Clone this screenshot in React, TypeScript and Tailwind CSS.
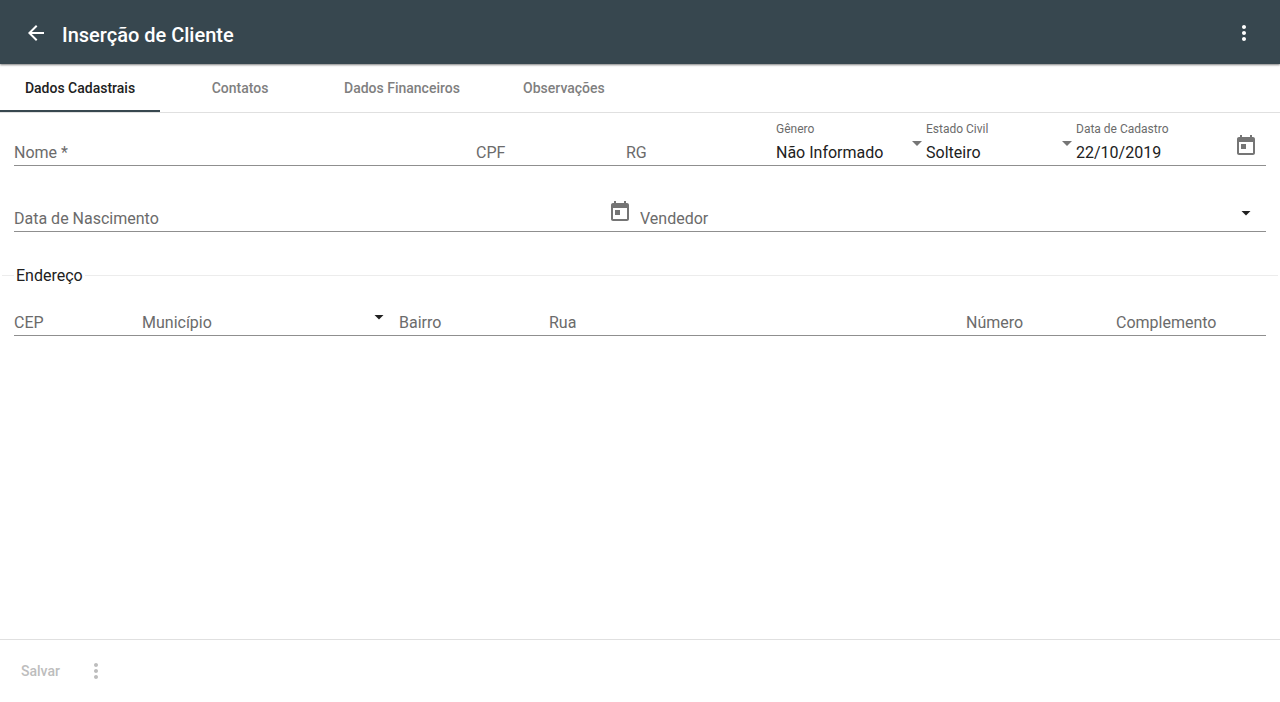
import { useState } from 'react';
import type { ReactNode } from 'react';
import clsx from 'clsx';

const TABS = ['Dados Cadastrais', 'Contatos', 'Dados Financeiros', 'Observações'];

function MoreIcon() {
  return (
    <svg viewBox="0 0 24 24" className="size-6 fill-current" aria-hidden="true">
      <path d="M12 8c1.1 0 2-.9 2-2s-.9-2-2-2-2 .9-2 2 .9 2 2 2zm0 2c-1.1 0-2 .9-2 2s.9 2 2 2 2-.9 2-2-.9-2-2-2zm0 6c-1.1 0-2 .9-2 2s.9 2 2 2 2-.9 2-2-.9-2-2-2z" />
    </svg>
  );
}

function BackIcon() {
  return (
    <svg viewBox="0 0 24 24" className="size-6 fill-current" aria-hidden="true">
      <path d="M20 11H7.83l5.59-5.59L12 4l-8 8 8 8 1.41-1.41L7.83 13H20v-2z" />
    </svg>
  );
}

function TodayIcon() {
  return (
    <svg viewBox="0 0 24 24" className="size-6 fill-[#757575]" aria-hidden="true">
      <path d="M19 3h-1V1h-2v2H8V1H6v2H5c-1.11 0-1.99.9-1.99 2L3 19c0 1.1.89 2 2 2h14c1.1 0 2-.9 2-2V5c0-1.1-.9-2-2-2zm0 16H5V8h14v11zM7 10h5v5H7z" />
    </svg>
  );
}

function DropDownIcon() {
  return (
    <svg viewBox="0 0 24 24" className="size-6 fill-[#212121]" aria-hidden="true">
      <path d="M7.5 11h9L12 15.5z" />
    </svg>
  );
}

type FieldProps = {
  id: string;
  label: string;
  className: string;
  value?: string;
  required?: boolean;
  options?: string[];
  action?: ReactNode;
  actionLabel?: string;
};

function Field({ id, label, className, value = '', required, options, action, actionLabel }: FieldProps) {
  const [current, setCurrent] = useState(value);
  const [focused, setFocused] = useState(false);
  const floating = focused || current !== '';

  return (
    <div className={clsx('grid grid-cols-[1fr_auto] grid-rows-[20px_25px] border-b border-[#8f8f8f]', className)}>
      <label
        htmlFor={id}
        className={clsx(
          'pointer-events-none z-10 col-start-1 truncate text-[#6b6b6b]',
          floating ? 'row-start-1 text-xs leading-[18px]' : 'row-start-2 text-base leading-[25px]',
        )}
      >
        {label}
        {required && ' *'}
      </label>
      {options ? (
        <>
          <select
            id={id}
            value={current}
            onChange={(e) => setCurrent(e.target.value)}
            className="col-span-2 col-start-1 row-start-2 min-w-0 appearance-none bg-transparent pr-5 leading-[25px] outline-none"
          >
            {options.map((option) => (
              <option key={option}>{option}</option>
            ))}
          </select>
          <svg
            viewBox="0 0 10 5"
            className="pointer-events-none col-start-2 row-start-2 mt-px mr-1 h-[5px] w-[10px] fill-[#757575]"
            aria-hidden="true"
          >
            <path d="M0 0h10L5 5z" />
          </svg>
        </>
      ) : (
        <input
          id={id}
          value={current}
          required={required}
          autoComplete="off"
          onChange={(e) => setCurrent(e.target.value)}
          onFocus={() => setFocused(true)}
          onBlur={() => setFocused(false)}
          className="col-start-1 row-start-2 w-full min-w-0 bg-transparent leading-[25px] outline-none"
        />
      )}
      {action && (
        <button
          type="button"
          aria-label={actionLabel}
          className="col-start-2 row-span-2 row-start-1 flex h-[38px] w-10 items-center justify-center self-end"
        >
          {action}
        </button>
      )}
    </div>
  );
}

export default function App() {
  const [tab, setTab] = useState(TABS[0]);

  return (
    <div className="flex min-h-screen flex-col bg-white font-[Roboto,sans-serif] text-base text-[#212121]">
      <header className="z-10 flex h-16 items-center bg-[#37474f] px-4 pt-0.5 text-white shadow-[0_1px_2px_rgba(0,0,0,0.5)]">
        <button type="button" aria-label="Voltar" className="flex size-10 items-center justify-center">
          <BackIcon />
        </button>
        <h1 className="flex-1 pt-1 pl-1.5 text-xl font-medium">Inserção de Cliente</h1>
        <button type="button" aria-label="Mais opções" className="flex size-10 items-center justify-center">
          <MoreIcon />
        </button>
      </header>

      {/* Tabs */}
      <nav role="tablist" className="flex border-b border-[#e0e0e0]">
        {TABS.map((name) => (
          <button
            key={name}
            type="button"
            role="tab"
            aria-selected={tab === name}
            onClick={() => setTab(name)}
            className={clsx(
              'h-12 min-w-40 border-b-2 px-6 pt-0.5 text-sm font-medium',
              tab === name ? 'border-[#37474f] text-[#212121]' : 'border-transparent text-[#7f7f7f]',
            )}
          >
            {name}
          </button>
        ))}
      </nav>

      <form id="cliente" className="flex-1 pt-[7px]">
        <div className="flex px-3.5">
          <Field id="nome" label="Nome" required className="min-w-0 flex-1" />
          <Field id="cpf" label="CPF" className="w-[150px]" />
          <Field id="rg" label="RG" className="w-[150px]" />
          <Field
            id="genero"
            label="Gênero"
            value="Não Informado"
            options={['Não Informado', 'Feminino', 'Masculino']}
            className="w-[150px]"
          />
          <Field
            id="estado-civil"
            label="Estado Civil"
            value="Solteiro"
            options={['Solteiro', 'Casado', 'Divorciado', 'Viúvo']}
            className="w-[150px]"
          />
          <Field
            id="data-cadastro"
            label="Data de Cadastro"
            value="22/10/2019"
            action={<TodayIcon />}
            actionLabel="Abrir calendário"
            className="w-[190px]"
          />
        </div>

        <div className="mt-5 flex px-3.5">
          <Field
            id="nascimento"
            label="Data de Nascimento"
            action={<TodayIcon />}
            actionLabel="Abrir calendário"
            className="min-w-0 flex-1"
          />
          <Field
            id="vendedor"
            label="Vendedor"
            action={<DropDownIcon />}
            actionLabel="Listar vendedores"
            className="min-w-0 flex-1"
          />
        </div>

        <fieldset className="mx-0.5 mt-[30px] border-t border-[#ececec] px-3 pt-0.5">
          <legend className="px-0.5 pt-0.5 leading-6">Endereço</legend>
          <div className="flex">
            <Field id="cep" label="CEP" className="w-32" />
            <Field
              id="municipio"
              label="Município"
              action={<DropDownIcon />}
              actionLabel="Listar municípios"
              className="w-[257px]"
            />
            <Field id="bairro" label="Bairro" className="w-[150px]" />
            <Field id="rua" label="Rua" className="min-w-0 flex-1" />
            <Field id="numero" label="Número" className="w-[150px]" />
            <Field id="complemento" label="Complemento" className="w-[150px]" />
          </div>
        </fieldset>
      </form>

      <footer className="flex h-[63px] items-center border-t border-[#e0e0e0] pl-[5px] text-[#bdbdbd]">
        <button type="submit" form="cliente" disabled className="h-9 px-4 text-sm font-medium">
          Salvar
        </button>
        <button type="button" aria-label="Mais ações" disabled className="flex size-10 items-center justify-center">
          <MoreIcon />
        </button>
      </footer>
    </div>
  );
}
